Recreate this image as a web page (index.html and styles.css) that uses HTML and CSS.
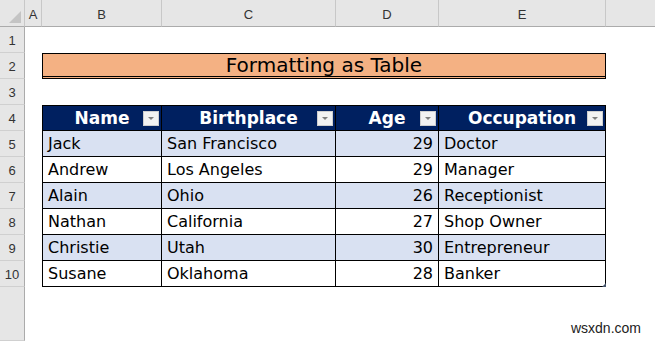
FILE: index.html
```html
<!DOCTYPE html>
<html lang="en">
<head>
  <meta charset="UTF-8" />
  <title>Formatting as Table</title>
  <link rel="stylesheet" href="styles.css">
</head>
<body>
  <div class="sheet">
    <!-- column headers -->
    <div class="corner"><span class="corner-tri"></span></div>
    <div class="col-head">A</div>
    <div class="col-head">B</div>
    <div class="col-head">C</div>
    <div class="col-head">D</div>
    <div class="col-head">E</div>
    <div class="col-head fill"></div>

    <!-- row 1 -->
    <div class="row-head">1</div>
    <div class="cell"></div><div class="cell"></div><div class="cell"></div><div class="cell"></div><div class="cell"></div><div class="cell"></div>

    <!-- row 2 -->
    <div class="row-head">2</div>
    <div class="cell"></div>
    <div class="title">Formatting as Table</div>
    <div class="cell"></div>

    <!-- row 3 -->
    <div class="row-head">3</div>
    <div class="cell"></div><div class="cell"></div><div class="cell"></div><div class="cell"></div><div class="cell"></div><div class="cell"></div>

    <!-- row 4: table header -->
    <div class="row-head">4</div>
    <div class="cell"></div>
    <div class="th first"><span></span><span class="th-text">Name</span><span class="filter"></span></div>
    <div class="th"><span></span><span class="th-text">Birthplace</span><span class="filter"></span></div>
    <div class="th"><span></span><span class="th-text">Age</span><span class="filter"></span></div>
    <div class="th"><span></span><span class="th-text">Occupation</span><span class="filter"></span></div>
    <div class="cell"></div>

    <div class="row-head">5</div>
    <div class="cell"></div>
    <div class="td first band">Jack</div>
    <div class="td band">San Francisco</div>
    <div class="td band num">29</div>
    <div class="td band">Doctor</div>
    <div class="cell"></div>

    <div class="row-head">6</div>
    <div class="cell"></div>
    <div class="td first">Andrew</div>
    <div class="td">Los Angeles</div>
    <div class="td num">29</div>
    <div class="td">Manager</div>
    <div class="cell"></div>

    <div class="row-head">7</div>
    <div class="cell"></div>
    <div class="td first band">Alain</div>
    <div class="td band">Ohio</div>
    <div class="td band num">26</div>
    <div class="td band">Receptionist</div>
    <div class="cell"></div>

    <div class="row-head">8</div>
    <div class="cell"></div>
    <div class="td first">Nathan</div>
    <div class="td">California</div>
    <div class="td num">27</div>
    <div class="td">Shop Owner</div>
    <div class="cell"></div>

    <div class="row-head">9</div>
    <div class="cell"></div>
    <div class="td first band">Christie</div>
    <div class="td band">Utah</div>
    <div class="td band num">30</div>
    <div class="td band">Entrepreneur</div>
    <div class="cell"></div>

    <div class="row-head">10</div>
    <div class="cell"></div>
    <div class="td first">Susane</div>
    <div class="td">Oklahoma</div>
    <div class="td num">28</div>
    <div class="td last">Banker<span class="resize"></span></div>
    <div class="cell"></div>

    <!-- empty space below -->
    <div class="row-head"></div>
    <div class="rest"><span class="mark">wsxdn.com</span></div>
  </div>
</body>
</html>
```

FILE: styles.css
```css
* {
  box-sizing: border-box;
  margin: 0;
  padding: 0;
}

body {
  background: #fff;
  width: 655px;
  height: 341px;
  overflow: hidden;
}

.sheet {
  display: grid;
  grid-template-columns: 25px 17px 120px 174px 103px 167px 1fr;
  grid-template-rows: 27px repeat(10, 26px) 54px;
  height: 341px;
  font-family: 'Comic Sans MS', 'DejaVu Sans', sans-serif;
}

/* sheet chrome */
.corner {
  background: #e6e6e6;
  border-right: 1px solid #c8c8c8;
  border-bottom: 1px solid #ababab;
  position: relative;
}

.corner-tri {
  position: absolute;
  right: 3px;
  bottom: 3px;
  width: 0;
  height: 0;
  border-left: 12px solid transparent;
  border-bottom: 12px solid #c4c4c4;
}

.col-head {
  background: #e6e6e6;
  border-right: 1px solid #c8c8c8;
  border-bottom: 1px solid #ababab;
  font-family: 'Liberation Sans', Arial, sans-serif;
  font-size: 13px;
  color: #333;
  display: flex;
  align-items: center;
  justify-content: center;
  padding-top: 2px;
}

.col-head.fill {
  border-right: none;
}

.row-head {
  background: #e6e6e6;
  border-right: 1px solid #ababab;
  border-bottom: 1px solid #d0d0d0;
  font-family: 'Liberation Sans', Arial, sans-serif;
  font-size: 13px;
  color: #333;
  display: flex;
  align-items: center;
  justify-content: center;
  padding-top: 2px;
}

.rest {
  grid-column: 2 / -1;
  display: flex;
  align-items: flex-end;
  justify-content: flex-end;
  padding: 0 14px 5px 0;
}

.mark {
  font-family: 'Liberation Sans', Arial, sans-serif;
  font-size: 14px;
  color: #222;
}

/* title row */
.title {
  grid-column: span 4;
  background: #f4b183;
  border: 1px solid #000;
  border-bottom: 3px double #000;
  font-size: 20px;
  color: #000;
  display: flex;
  align-items: center;
  justify-content: center;
}

/* formatted table */
.th {
  background: #002060;
  color: #fff;
  font-weight: bold;
  font-size: 17px;
  border-top: 1px solid #000;
  border-right: 1px solid #000;
  border-bottom: 1px solid #000;
  display: grid;
  grid-template-columns: 18px 1fr 18px;
  align-items: center;
}

.th-text {
  text-align: center;
}

.filter {
  width: 16px;
  height: 15px;
  background: #f2f2f2;
  border: 1px solid #cfcfcf;
  position: relative;
}

.filter::after {
  content: "";
  position: absolute;
  left: 4px;
  top: 5px;
  border-left: 3px solid transparent;
  border-right: 3px solid transparent;
  border-top: 3px solid #7f7f7f;
}

.td {
  background: #fff;
  border-right: 1px solid #000;
  border-bottom: 1px solid #000;
  font-size: 16px;
  color: #000;
  display: flex;
  align-items: center;
  padding: 0 5px;
  white-space: nowrap;
  overflow: hidden;
}

.td.band {
  background: #d9e1f2;
}

.first {
  border-left: 1px solid #000;
}

.num {
  justify-content: flex-end;
}

.last {
  position: relative;
  overflow: visible;
}

.resize {
  position: absolute;
  right: -1px;
  bottom: -1px;
  width: 0;
  height: 0;
  border-left: 4px solid transparent;
  border-bottom: 4px solid #44546a;
}
```
